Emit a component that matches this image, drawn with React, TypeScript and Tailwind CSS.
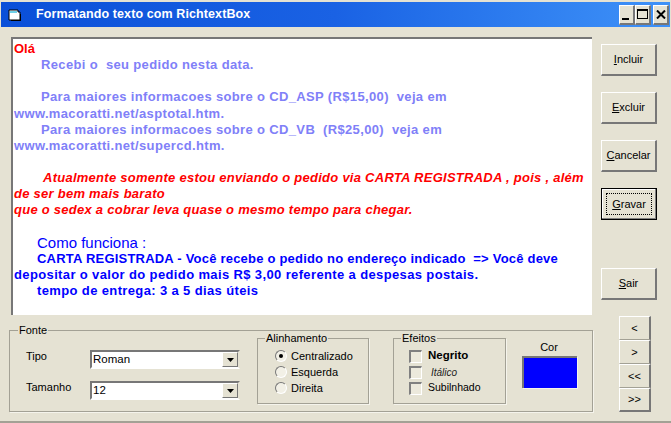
const ui = "font-['Liberation_Sans',Arial,sans-serif]";

function Btn({ children, focus, className = "" }: { children: React.ReactNode; focus?: boolean; className?: string }) {
  return (
    <div className={`h-[32px] w-[56px] flex items-center justify-center text-[11px] text-black ${focus ? "border border-black shadow-[inset_-1px_-1px_0_#808080,inset_1px_1px_0_#fff]" : "border-t border-l border-r-2 border-b-2 border-t-[#fff] border-l-[#fff] border-r-[#777] border-b-[#777]"} ${className}`}>
      {focus ? (
        <span className="border border-dotted border-black w-[46px] h-[22px] flex items-center justify-center">{children}</span>
      ) : children}
    </div>
  );
}

function Cap({ b, c }: { b: string; c: string }) {
  return <span><span className="underline">{b}</span>{c}</span>;
}

function WinBtn({ children, className = "" }: { children: React.ReactNode; className?: string }) {
  return (
    <div className={`w-[16px] h-[20px] bg-[#e5e2d3] border-t border-l border-r-2 border-b-2 border-t-[#fff] border-l-[#fff] border-r-[#777] border-b-[#777] flex items-center justify-center ${className}`}>
      {children}
    </div>
  );
}

function Select({ value }: { value: string }) {
  return (
    <div className="w-[150px] h-[19px] bg-white border-2 border-t-[#777] border-l-[#777] border-r-[#e5e2d3] border-b-[#fff] flex items-center justify-between text-[11.5px] text-black pl-[1px]">
      <span>{value}</span>
      <span className="w-[16px] h-[15px] bg-[#e5e2d3] border-t border-l border-r border-b border-t-[#fff] border-l-[#fff] border-r-[#777] border-b-[#777] flex items-center justify-center">
        <svg width="7" height="4" viewBox="0 0 7 4"><path d="M0 0h7L3.5 4z" fill="#000" /></svg>
      </span>
    </div>
  );
}

function Radio({ label, on }: { label: string; on?: boolean }) {
  return (
    <div className="h-[16px] flex items-center text-[11px] text-black">
      <span className="w-[12px] h-[12px] rounded-full bg-[#f2f0e6] border border-t-[#777] border-l-[#777] border-r-[#fff] border-b-[#fff] flex items-center justify-center mr-[4px]">
        {on && <span className="w-[4px] h-[4px] rounded-full bg-black" />}
      </span>
      {label}
    </div>
  );
}

function Check({ children }: { children: React.ReactNode }) {
  return (
    <div className="h-[16px] flex items-center text-[11px] text-black">
      <span className="w-[13px] h-[13px] bg-[#ece9dc] border-t-2 border-l-2 border-r border-b border-t-[#808080] border-l-[#808080] border-r-[#fff] border-b-[#fff] mr-[6px]" />
      {children}
    </div>
  );
}

function Frame({ title, className, children }: { title: string; className: string; children: React.ReactNode }) {
  return (
    <div className={`relative border border-[#a3a195] shadow-[1px_1px_0_#f5f4ec] ${className}`}>
      <span className="absolute -top-[8px] left-[7px] bg-[#e5e2d3] px-[1px] text-[11px] leading-[14px] text-black">{title}</span>
      {children}
    </div>
  );
}

function Line({ children, cls = "" }: { children: React.ReactNode; cls?: string }) {
  return <div className={`h-[16.125px] leading-[16.125px] whitespace-pre ${cls}`}>{children || " "}</div>;
}

function Nav({ t, last }: { t: string; last?: boolean }) {
  return (
    <div className={`h-[24px] w-[32px] flex items-center justify-center text-[11px] text-black border-t border-l border-t-[#fff] border-l-[#fff] border-r-2 border-r-[#777] ${last ? "border-b-2 border-b-[#777]" : "border-b border-b-[#a3a195]"}`}>
      {t}
    </div>
  );
}

export default function App() {
  const lav = "text-[#8080f8] font-bold text-[13px] tracking-[0.35px]";
  const red = "text-[#ff0000] font-bold italic text-[13px] tracking-[0.26px]";
  const blue = "text-[#0000ff] font-bold text-[13px]";
  return (
    <div className={`${ui} w-[671px] h-[423px] bg-[#e5e2d3] flex flex-col pt-[2px] pl-[1px] border-b-2 border-b-[#a3a195] overflow-hidden`}>
      <div className="h-[25px] w-[669px] shrink-0 bg-gradient-to-r from-[#0a4fd8] via-[#1a62e4] to-[#3f92f8] flex items-center pl-[7px] pr-[1px]">
        <svg width="13" height="12" viewBox="0 0 13 12" className="shrink-0">
          <path d="M1 1h9v2h2v8H1z" fill="#fff" stroke="#000" />
          <path d="M2 2h7v2H2z" fill="#6fd0e8" />
          <path d="M12 5h1v7H3v-1h9z" fill="#000" />
        </svg>
        <span className="ml-[15px] text-[12.5px] font-bold text-white tracking-[0.1px]">Formatando texto com RichtextBox</span>
        <div className="ml-auto flex">
          <WinBtn><span className="w-[7px] h-[2px] bg-black mt-[9px] -ml-[3px]" /></WinBtn>
          <WinBtn><span className="w-[11px] h-[10px] border border-black border-t-2 block" /></WinBtn>
          <WinBtn className="ml-[2px]">
            <svg width="10" height="9" viewBox="0 0 10 9"><path d="M1 0.5l8 8M9 0.5l-8 8" stroke="#000" strokeWidth="2" fill="none" /></svg>
          </WinBtn>
        </div>
      </div>

      <div className="flex shrink-0 pl-[10px] pt-[10px]">
        <div className="w-[581px] h-[278px] bg-white border-t-2 border-l-2 border-t-[#777] border-l-[#777] pl-[1px] pt-[2px] overflow-hidden">
          <Line cls="text-[#ff0000] font-bold text-[13px]">Olá</Line>
          <Line cls={`${lav} pl-[27px]`}>Recebi o  seu pedido nesta data.</Line>
          <Line cls={lav}>{""}</Line>
          <Line cls={`${lav} pl-[27px]`}>Para maiores informacoes sobre o CD_ASP (R$15,00)  veja em</Line>
          <Line cls={lav}>www.macoratti.net/asptotal.htm.</Line>
          <Line cls={`${lav} pl-[27px]`}>Para maiores informacoes sobre o CD_VB  (R$25,00)  veja em</Line>
          <Line cls={lav}>www.macoratti.net/supercd.htm.</Line>
          <Line cls={lav}>{""}</Line>
          <Line cls={`${red} pl-[29px]`}>Atualmente somente estou enviando o pedido via CARTA REGISTRADA , pois , além</Line>
          <Line cls={red}>de ser bem mais barato</Line>
          <Line cls={red}>que o sedex a cobrar leva quase o mesmo tempo para chegar.</Line>
          <Line cls={red}>{""}</Line>
          <Line cls="text-[#0000ff] text-[15px] pl-[23px] font-['Liberation_Sans_Narrow','Liberation_Sans',sans-serif]">Como funciona :</Line>
          <Line cls={`${blue} tracking-[0.21px] pl-[23px]`}>CARTA REGISTRADA - Você recebe o pedido no endereço indicado  =&gt; Você deve</Line>
          <Line cls={`${blue} tracking-[0.37px]`}>depositar o valor do pedido mais R$ 3,00 referente a despesas postais.</Line>
          <Line cls={`${blue} tracking-[0.37px] pl-[23px]`}>tempo de entrega: 3 a 5 dias úteis</Line>
        </div>
        <div className="ml-[9px] pt-[7px] flex flex-col gap-[16px]">
          <Btn><Cap b="I" c="ncluir" /></Btn>
          <Btn><Cap b="E" c="xcluir" /></Btn>
          <Btn><Cap b="C" c="ancelar" /></Btn>
          <Btn focus><Cap b="G" c="ravar" /></Btn>
          <Btn className="mt-[32px]"><Cap b="S" c="air" /></Btn>
        </div>
      </div>

      <div className="flex items-start pl-[8px] mt-[1px]">
        <div className="relative mt-[14px] w-[584px] h-[82px] border border-[#a3a195] flex shadow-[1px_1px_0_#f5f4ec]">
          <span className="absolute -top-[8px] left-[8px] bg-[#e5e2d3] px-[1px] text-[11px] leading-[14px] text-black">Fonte</span>
          <div className="w-[247px] shrink-0 pl-[16px] pr-[17px] pt-[19px] flex flex-col gap-[12px] text-[11px] text-black">
            <div className="flex items-center justify-between">
              <span className="-mt-[7px]">Tipo</span>
              <Select value="Roman" />
            </div>
            <div className="flex items-center justify-between">
              <span className="-mt-[6px]">Tamanho</span>
              <Select value="12" />
            </div>
          </div>
          <Frame title="Alinhamento" className="w-[112px] h-[66px] mt-[7px] pl-[17px] pt-[9px] shrink-0">
            <Radio label="Centralizado" on />
            <Radio label="Esquerda" />
            <Radio label="Direita" />
          </Frame>
          <Frame title="Efeitos" className="w-[113px] h-[66px] mt-[7px] ml-[24px] pl-[15px] pt-[9px] shrink-0">
            <Check><b className="text-[11.5px]">Negrito</b></Check>
            <Check><i className="ml-[3px] text-[10px] text-[#222]">Itálico</i></Check>
            <Check><span className="text-[10.5px]">Subilnhado</span></Check>
          </Frame>
          <div className="ml-[15px] mt-[9px] flex flex-col items-center w-[56px]">
            <span className="text-[11px] leading-[14px] text-black">Cor</span>
            <div className="mt-[2px] w-[55px] h-[32px] bg-[#0000ff] border-t-2 border-l-2 border-t-[#777] border-l-[#777] shadow-[1px_1px_0_#f5f4ec]" />
          </div>
        </div>
        <div className="ml-[26px] flex flex-col">
          <Nav t="<" />
          <Nav t=">" />
          <Nav t="<<" />
          <Nav t=">>" last />
        </div>
      </div>
    </div>
  );
}
